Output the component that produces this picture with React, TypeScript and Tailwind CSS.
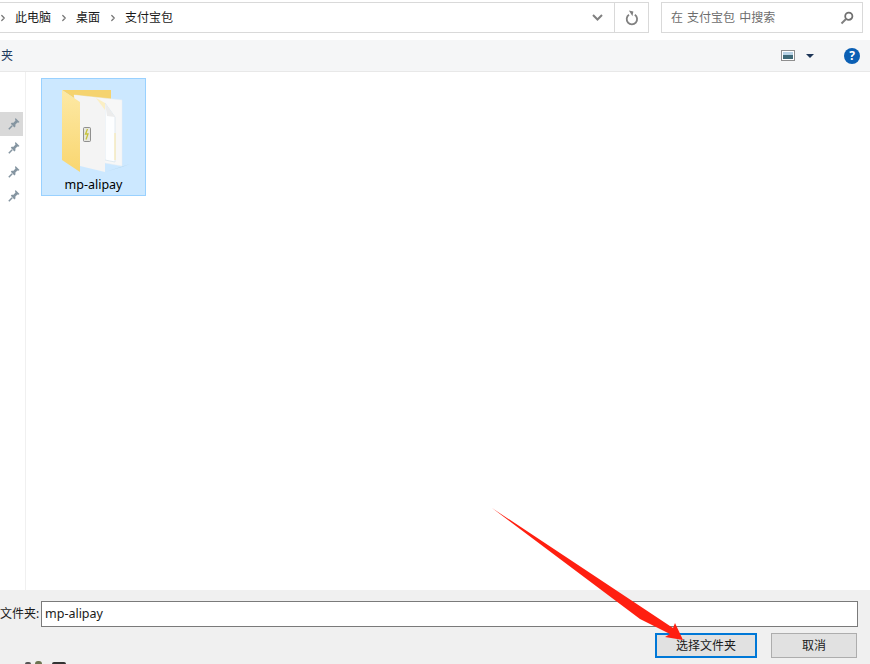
import { ChevronRight } from "lucide-react";

const crumbs = ["此电脑", "桌面", "支付宝包"];

function Pin() {
  return (
    <svg width="12" height="13" viewBox="0 0 12 13" className="mb-[2px] text-[#8595a1]">
      <path d="M7.500 1 L11.500 5 L10.300 5.800 L9.400 5.400 L7.400 7.600 L7.400 9.600 L6.400 10.400 L2.800 6.800 L3.600 5.800 L5.500 5.700 L7.500 3.500 L7 2.200z" fill="currentColor" />
      <path d="M4.200 8.800 L.8 12.200" stroke="currentColor" strokeWidth="1.500" />
    </svg>
  );
}

function FolderIcon() {
  return (
    <svg width="72" height="88" viewBox="0 0 72 88">
      <defs>
        <linearGradient id="fold" x1="0" y1="0" x2="0" y2="1">
          <stop offset="0" stopColor="#fde9a5" />
          <stop offset="1" stopColor="#f9d670" />
        </linearGradient>
      </defs>
      <path d="M2 2 L51 2 L51 14 L20 14z" fill="#f5d36f" />
      <path d="M45 84 L70 76 L62 79z" fill="#b5d2e6" />
      <path d="M14 7 L62 12 L62 78 L45 75z" fill="#f7f7f7" stroke="#e8eef2" strokeWidth="0.500" />
      <path d="M45 15 L55 29 L55 74 L45 72z" fill="#fdfeff" stroke="#dbe6ee" strokeWidth="0.800" />
      <path d="M45 15 L55 29 L47 28z" fill="#ececec" />
      <path d="M54.500 45 L55.500 45 L55.500 72 L54.500 72z" fill="#fbe8a6" />
      <path d="M14 7 L40 11 L45 17 L45 84 L20 78z" fill="#f4f4f4" />
      <path d="M36 10 L45 15 L45 22z" fill="#fbefc4" />
      <path d="M2 2 L20 14 L20 84 L2 72z" fill="url(#fold)" />
      <rect x="23.500" y="39.500" width="7" height="14" rx="1" fill="#e6e6de" stroke="#777" strokeWidth="0.800" />
      <path d="M27.500 41 L25.500 46 L28 46 L26 51.500" fill="none" stroke="#c6c23a" strokeWidth="1.300" />
    </svg>
  );
}

export default function App() {
  return (
    <div className="relative flex h-[664px] w-[870px] flex-col overflow-hidden bg-white font-['Noto_Sans','Noto_Sans_CJK_SC',sans-serif] text-xs text-[#1a1a1a]">
      {/* address + search */}
      <div className="mt-[2px] flex h-[31px] items-stretch pr-[7px]">
        <div className="flex flex-1 items-center border-y border-r border-[#d9d9d9]">
          <ChevronRight size={10} strokeWidth={3} className="ml-[-2px] text-[#777]" />
          {crumbs.map((c, i) => (
            <div key={c} className="flex items-center">
              <span className="ml-[7px]">{c}</span>
              {i < crumbs.length - 1 && <ChevronRight size={10} strokeWidth={3} className="ml-[8px] text-[#777]" />}
            </div>
          ))}
          <div className="ml-auto flex h-full items-center">
            <div className="flex w-[34px] justify-center">
              <svg width="11" height="7" viewBox="0 0 11 7">
                <path d="M1 1 L5.500 5.500 L10 1" fill="none" stroke="#808080" strokeWidth="2" />
              </svg>
            </div>
            <div className="flex h-full w-[34px] items-center justify-center border-l border-[#d9d9d9]">
              <svg width="14" height="16" viewBox="0 0 14 16">
                <path d="M9.800 4.800 A5.200 5.200 0 1 1 4 4.800" fill="none" stroke="#808080" strokeWidth="1.800" />
                <path d="M3.500 1 L8 1 L8 6z" fill="#808080" transform="rotate(10 6 3)" />
              </svg>
            </div>
          </div>
        </div>
        <div className="ml-[12px] flex w-[202px] items-center justify-between border border-[#d9d9d9] pl-[9px] pr-[8px] text-[#6d6d6d] [word-spacing:1px]">
          <span>在 支付宝包 中搜索</span>
          <svg width="14" height="14" viewBox="0 0 14 14">
            <circle cx="8.800" cy="5.200" r="3.600" fill="none" stroke="#707070" strokeWidth="1.800" />
            <path d="M6 8 L1.500 12.500" stroke="#808080" strokeWidth="2" />
          </svg>
        </div>
      </div>

      {/* toolbar */}
      <div className="mt-[7px] flex h-[32px] items-center border-b border-[#e8e8e8] bg-[#f5f6f7]">
        <span className="ml-px text-[#1e3a5f]">夹</span>
        <div className="ml-auto flex items-center">
          <svg width="14" height="11" viewBox="0 0 14 11">
            <rect x="0.500" y="0.500" width="13" height="10" fill="#fff" stroke="#8f8f8f" />
            <rect x="2" y="2" width="10" height="3" fill="#b9d3e6" />
            <rect x="2" y="5" width="10" height="4" fill="#3f6a78" />
          </svg>
          <span className="ml-[11px] h-0 w-0 border-x-[4px] border-t-[4px] border-x-transparent border-t-[#1d3557]" />
          <span className="ml-[30px] mr-[10px] flex h-4 w-4 items-center justify-center rounded-full bg-[#0a5fb4] text-[12px] font-bold leading-none text-white">?</span>
        </div>
      </div>

      {/* file area */}
      <div className="flex flex-1 min-h-0">
        <div className="flex w-[26px] flex-col border-r border-[#f0f0f0] pt-[40px]">
          <div className="flex h-[24px] w-[23px] items-center justify-end bg-[#d9d9d9] pr-[3px]"><Pin /></div>
          <div className="flex h-[24px] w-[23px] items-center justify-end pr-[3px]"><Pin /></div>
          <div className="flex h-[24px] w-[23px] items-center justify-end pr-[3px]"><Pin /></div>
          <div className="flex h-[24px] w-[23px] items-center justify-end pr-[3px]"><Pin /></div>
        </div>
        <div className="pl-[15px] pt-[6px]">
          <div className="flex h-[118px] w-[105px] flex-col items-center border border-[#99d1ff] bg-[#cce8ff]">
            <div className="ml-[18px] mt-[9px] h-[88px] self-start"><FolderIcon /></div>
            <span className="text-[12.500px] leading-[18px] text-black">mp-alipay</span>
          </div>
        </div>
      </div>

      {/* footer */}
      <div className="relative flex h-[74px] flex-col bg-[#f0f0f0] pr-[12px]">
        <div className="mt-[11px] flex items-center">
          <span className="mr-[4px] w-[37px] shrink-0 whitespace-nowrap text-right">文件夹:</span>
          <div className="flex h-[26px] flex-1 items-center border border-[#7a7a7a] bg-white pl-[3px] text-[12.500px]">mp-alipay</div>
        </div>
        <div className="mt-[6px] flex justify-end gap-[14px] pr-px">
          <button className="h-[25px] w-[102px] border-2 border-[#0078d7] bg-[#e1e1e1]">选择文件夹</button>
          <button className="h-[25px] w-[86px] border border-[#adadad] bg-[#e1e1e1]">取消</button>
        </div>
        {/* bits of the window below the dialog */}
        <div className="absolute bottom-0 left-[25px] flex items-end">
          <span className="h-[2px] w-[6px] rounded-t-full bg-[#555]" />
          <span className="ml-[4px] h-[3px] w-[7px] rounded-t-full bg-[#6b7350]" />
          <span className="ml-[10px] h-[2px] w-[14px] rounded-t-full bg-[#333]" />
        </div>
      </div>

      {/* red annotation arrow */}
      <svg className="absolute left-0 top-0" width="870" height="664" viewBox="0 0 870 664">
        <path d="M492 508 L673 628 L675 623 L683 640 L665 637 L670 634 L640 619z" fill="#ff1f10" />
      </svg>
    </div>
  );
}
